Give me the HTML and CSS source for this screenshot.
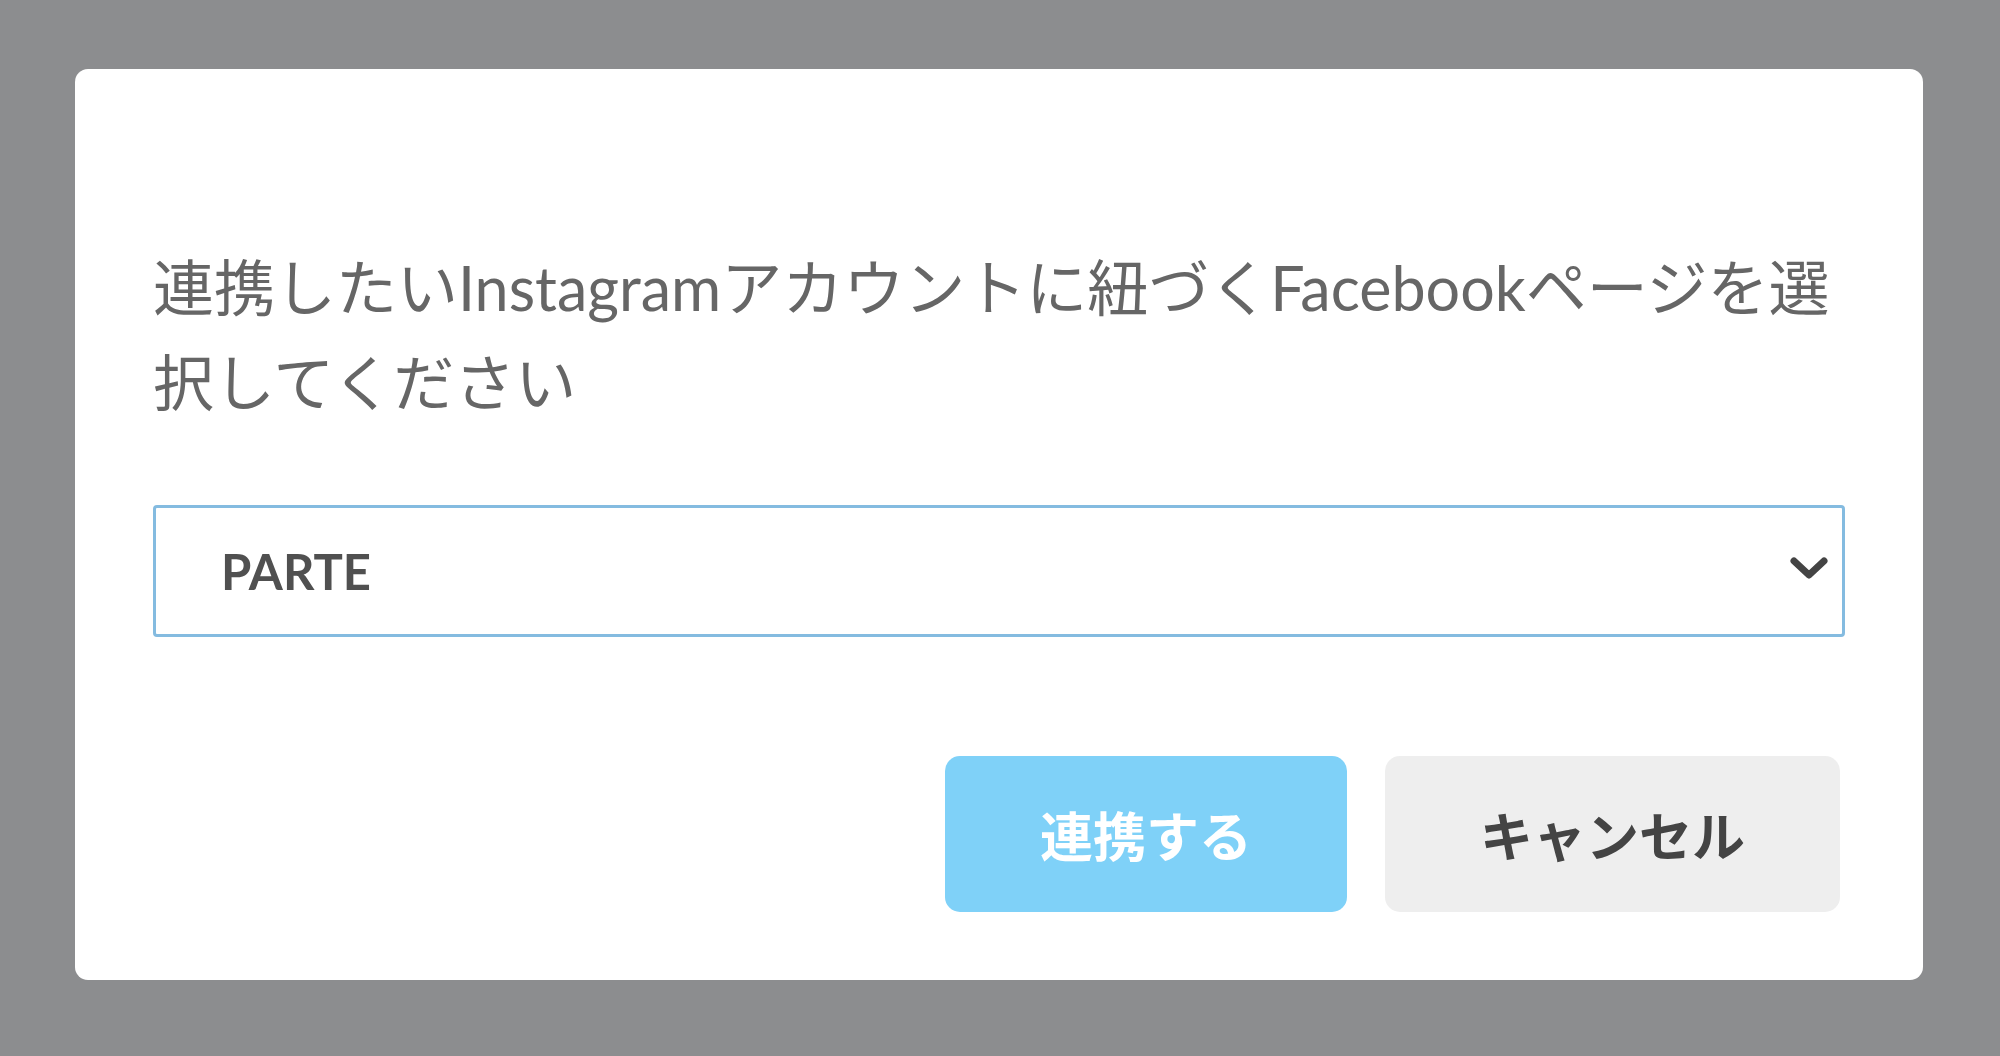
FILE: index.html
```html
<!DOCTYPE html>
<html lang="ja">
<head>
<meta charset="utf-8">
<title>Facebookページ選択</title>
<link rel="stylesheet" href="styles.css">
</head>
<body>
<div class="overlay">
  <div class="dialog">
    <p class="message">連携したいInstagramアカウントに紐づくFacebookページを選択してください</p>
    <div class="select">
      <span class="select-value">PARTE</span>
      <svg class="chevron" width="38" height="26" viewBox="0 0 38 26"><path d="M4 5 L19 19 L34 5" fill="none" stroke="#444" stroke-width="7" stroke-linecap="round" stroke-linejoin="round"/></svg>
    </div>
    <div class="actions">
      <button class="btn btn-primary">連携する</button>
      <button class="btn btn-cancel">キャンセル</button>
    </div>
  </div>
</div>
</body>
</html>
```
FILE: styles.css
```css
html, body {
  margin: 0;
  padding: 0;
}
body {
  width: 2000px;
  height: 1056px;
  background: #8c8d8f;
  font-family: Lato, "Noto Sans CJK JP", sans-serif;
  overflow: hidden;
}
.overlay {
  padding: 69px 0 0 75px;
}
.dialog {
  width: 1848px;
  height: 911px;
  box-sizing: border-box;
  background: #ffffff;
  border-radius: 13px;
  padding: 171px 78px 0 78px;
}
.message {
  margin: 0;
  font-size: 61px;
  line-height: 95px;
  color: #666666;
}
.select {
  margin-top: 75px;
  height: 132px;
  box-sizing: border-box;
  border: 3px solid #84bbe0;
  border-radius: 4px;
  display: flex;
  align-items: center;
  justify-content: space-between;
  padding: 0 14px 0 65px;
}
.select-value {
  font-size: 49px;
  font-weight: 700;
  color: #505050;
  line-height: 1;
}
.chevron {
  display: block;
  margin-top: -4px;
}
.actions {
  margin-top: 119px;
  display: flex;
  justify-content: flex-end;
  gap: 38px;
  padding-right: 5px;
}
.btn {
  height: 156px;
  border: none;
  border-radius: 15px;
  font-family: "Noto Sans CJK JP", sans-serif;
  font-size: 53px;
  font-weight: 700;
  padding: 0;
  cursor: pointer;
}
.btn-primary {
  width: 402px;
  background: #7fd1f8;
  color: #ffffff;
}
.btn-cancel {
  width: 455px;
  background: #eeeeee;
  color: #444444;
}
```
